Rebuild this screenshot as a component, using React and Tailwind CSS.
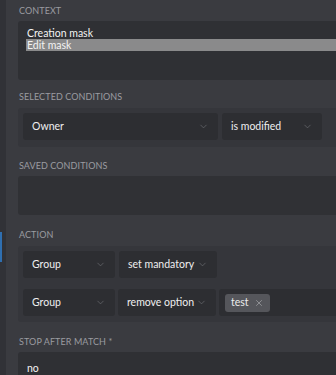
import { ChevronDown, X } from "lucide-react";

const font = { fontFamily: "Lato, 'Noto Sans', sans-serif" };

function Label({ children }) {
  return (
    <div className="h-[14px] text-[9px] leading-[14px] uppercase tracking-[0.01em] text-[#9a9ba0] pl-[1px] whitespace-nowrap">
      {children}
    </div>
  );
}

function Select({ value, width }) {
  return (
    <div
      className={`${width} h-[27px] shrink-0 rounded-[3px] bg-[#2d2e32] flex items-center justify-between pl-[9px] pr-[9px] text-[10.5px] text-[#efeff0] whitespace-nowrap`}
    >
      <span>{value}</span>
      <ChevronDown size={11} strokeWidth={1.3} className="text-[#75767b]" />
    </div>
  );
}

export default function App() {
  return (
    <div className="w-[336px] h-[375px] overflow-hidden bg-[#3a3b40] flex items-start" style={font}>
      {/* side strip */}
      <div className="w-[6px] h-[375px] shrink-0 bg-[#313237]">
        <div className="h-[232px]" />
        <div className="h-[30px] w-[2px] bg-[#2f6fb0]" />
      </div>

      <div className="w-[420px] shrink-0 pl-[12px] pt-[4px]">
        <Label>Context</Label>
        <div className="mt-[3px] h-[59px] rounded-l-[3px] bg-[#2f3034] pl-[8px] pt-[6px] text-[10.5px] leading-[12px] text-[#f3f3f3]">
          <div className="pl-[1px] h-[12px]">Creation mask</div>
          <div className="pl-[1px] h-[12px] bg-[#8a8a8b]">Edit mask</div>
        </div>

        <div className="mt-[10px]">
          <Label>Selected conditions</Label>
        </div>
        <div className="mt-[4px] h-[39px] rounded-l-[3px] bg-[#35363b] pl-[5px] pt-[5px] flex gap-[4px]">
          <Select value="Owner" width="w-[195px]" />
          <Select value="is modified" width="w-[100px]" />
        </div>

        <div className="mt-[12px]">
          <Label>Saved conditions</Label>
        </div>
        <div className="mt-[3px] h-[39px] rounded-l-[3px] bg-[#303135]" />

        <div className="mt-[13px]">
          <Label>Action</Label>
        </div>
        <div className="mt-[4px] h-[76px] rounded-l-[3px] bg-[#35363b] pl-[5px] pt-[5px] flex flex-col gap-[11px]">
          <div className="flex gap-[4px]">
            <Select value="Group" width="w-[92px]" />
            <Select value="set mandatory" width="w-[98px]" />
          </div>
          <div className="flex gap-[3px]">
            <Select value="Group" width="w-[92px]" />
            <Select value="remove option" width="w-[98px]" />
            <div className="flex-1 h-[27px] rounded-l-[3px] bg-[#2d2e32] flex items-center pl-[6px]">
              <div className="h-[18px] rounded-[3px] bg-[#55565b] flex items-center gap-[5px] pl-[6px] pr-[6px] text-[10.5px] text-[#ececec]">
                <span>test</span>
                <X size={10} strokeWidth={1.6} className="text-[#a9aaae]" />
              </div>
            </div>
          </div>
        </div>

        <div className="mt-[13px]">
          <Label>Stop after match *</Label>
        </div>
        <div className="mt-[3px] h-[40px] rounded-l-[3px] bg-[#2f3034] pl-[9px] pt-[9px] text-[10.5px] text-[#f3f3f3]">
          no
        </div>
      </div>
    </div>
  );
}
